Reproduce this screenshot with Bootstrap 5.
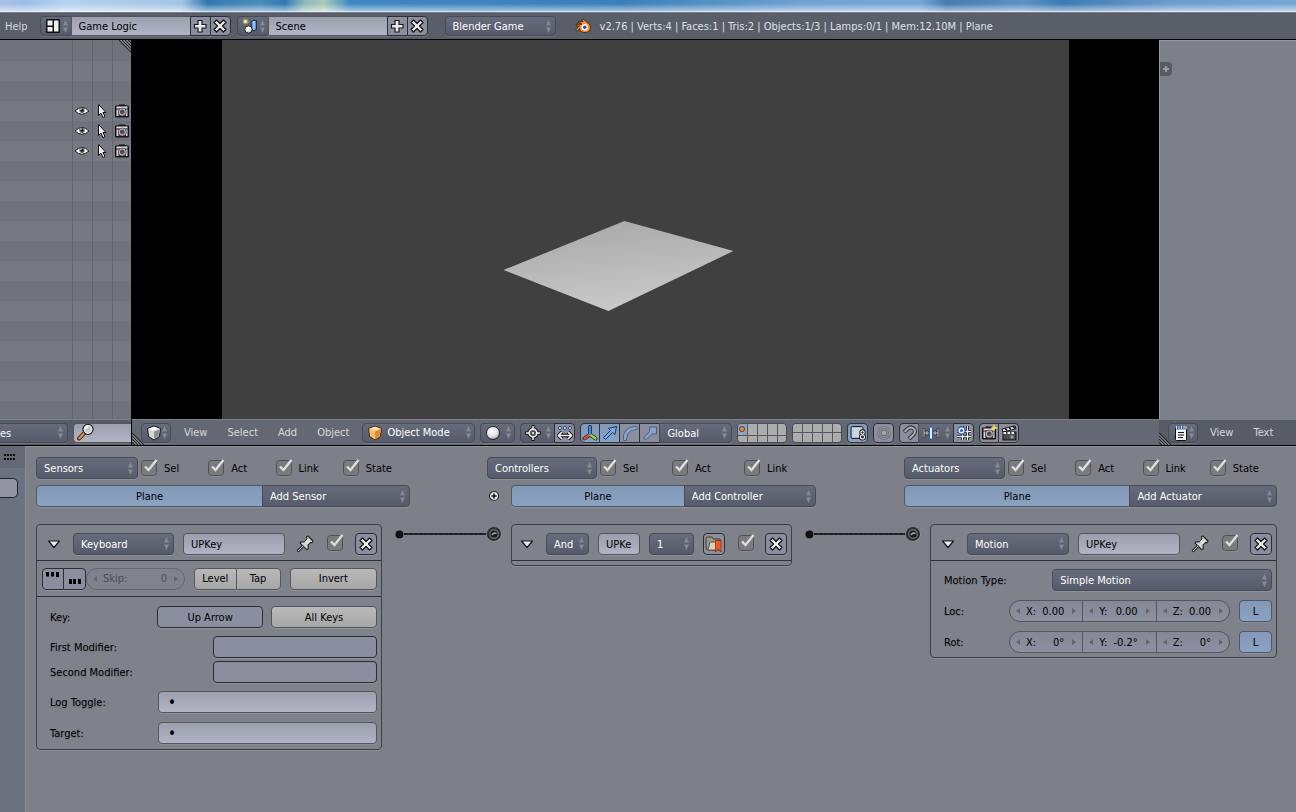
<!DOCTYPE html>
<html lang="en">
<head>
<meta charset="utf-8">
<meta name="viewport" content="width=device-width, initial-scale=1">
<title>Game Logic</title>
<link rel="stylesheet" href="https://cdn.jsdelivr.net/npm/bootstrap@5.3.0/dist/css/bootstrap.min.css">
<style>
:root{--updown:url("data:image/svg+xml,%3Csvg xmlns='http://www.w3.org/2000/svg' width='5' height='13'%3E%3Cpath d='M0 5.5L2.500 0L5 5.5ZM0 7.5H5L2.500 13Z' fill='%23868990'/%3E%3C/svg%3E");}
html{height:100%}
body{min-height:100%;margin:0;background:#7d8088;color:#000;font-family:"DejaVu Sans Condensed","DejaVu Sans",sans-serif;font-size:11px;line-height:14px;overflow-x:hidden}
svg{display:block;flex:none}
.ico{width:16px;height:16px}
/* desktop edge above the window */
.desktop{height:12px;background:linear-gradient(180deg,transparent 30%,rgba(255,255,255,.5) 90%,#fff),linear-gradient(90deg,#a9c0e6 0,#9cbdea 2%,#b5d3f0 5%,#a3c4e6 14%,#3278b0 16%,#4a8cbc 20%,#3179b4 22%,#8fb8bc 23.5%,#a9cbb8 25%,#4088c2 27%,#3b7fba 48%,#6fa3d2 62%,#76a9d8 71%,#457bb0 73%,#5c93c6 79%,#3c79b4 82%,#6a9ccc 90%,#78a8d6 100%)}
.bar-top{height:28px;background:#5a5e69;border-top:1px solid #777b87;border-bottom:1px solid #000;padding-left:5px;color:#dfe0e3}
.bar-top .mnu,.bar-top .stats{line-height:16px;padding-top:2px}
.bar-area{height:27px;border-top:1px solid #7c808b;border-bottom:1px solid #000;background:#646874}
.bar-area .mnu{padding-top:1px}
.bar-dark{background:#585c67}
/* widgets */
.form-select.sel,.btn.w,.form-control.fld{font:inherit;line-height:20px;height:22px;min-width:0;border:1px solid #484b53;border-radius:4px;box-shadow:0 1px 0 rgba(255,255,255,.13);padding:1px 7px 0;white-space:nowrap}
.form-select.sel{color:#fff;background:var(--updown) no-repeat right 4px center,linear-gradient(#666c7c,#555b6a);background-size:5px 13px,auto;overflow:hidden}
.btn.w{display:flex;align-items:center;justify-content:center}
.btn.menu.w{color:#fff;background:var(--updown) no-repeat right 3px center,linear-gradient(#666c7c,#555b6a);padding:0 12px 0 4px;justify-content:flex-start}
.form-control.fld{color:#000;background:linear-gradient(#9c9fae,#b1b4c5);border-color:#55575e}
.btn.tool.w{background:#8b8e9e;border-color:#2c2e33;color:#000;padding:0}
.btn.grey.w{background:linear-gradient(#b9b9b9,#a6a6a6);border-color:#55575b;color:#000;padding:1px 0 0}
.btn.on.w{background:linear-gradient(#8199b7,#8ba3c2);border-color:#4d5868;color:#000;padding:1px 0 0}
.btn.tool.on.w{border-color:#2c3440;padding:0}
.btn.tool.txt{padding:1px 0 0}
.form-control.dot{font-size:15px;padding-left:9px}
.short .form-select.sel,.short .btn.w,.short .form-control.fld{height:20px;line-height:18px}
.joined>*{margin:0}
.joined>*:not(:first-child){border-top-left-radius:0!important;border-bottom-left-radius:0!important;margin-left:-1px}
.joined>*:not(:last-child){border-top-right-radius:0!important;border-bottom-right-radius:0!important}
.grow{flex:1 1 0!important;width:1px}
.sq{width:21px;flex:none}
.sq:first-child{width:20px}
.mnu{color:#d7d8dc;text-decoration:none;padding:0 10px}
.id-icon{width:32px}.id-name{width:120px!important}
.seg5{gap:5px}
/* outliner */
.outliner{width:132px;border-right:1px solid #000}
.rows{position:relative;overflow:hidden;background:linear-gradient(90deg,transparent 72px,#62656d 72px 73px,transparent 73px 92px,#62656d 92px 93px,transparent 93px 112px,#62656d 112px 113px,transparent 113px),repeating-linear-gradient(#70737b 0 20px,#767981 20px 40px);background-position:0 0,0 1px;padding-top:61px}
.rows .line{height:20px;padding-left:74px;gap:4px}
.grip{position:absolute;width:12px;height:12px}
.mid{flex:406 1 0;min-height:200px}
.logic{flex:366 1 0}
.stage{background:#000;padding:0 8.77%}
.stage svg{width:100%;height:100%;background:#404040}
.texted{width:137px}
.textbody{background:#7d8088;border-left:1px solid #9497a0;border-top:1px solid #9497a0;position:relative}
.tab-plus{position:absolute;left:0;top:21px;width:12px;height:14px;background:#595b60;border:0;border-radius:0 4px 4px 0;padding:0}
/* layers */
.layers{display:grid;grid-template-columns:repeat(5,1fr);width:50px;height:20px;gap:1px;background:#55575c;border:1px solid #4a4c51;border-radius:4px;overflow:hidden}
.layers button{border:0;padding:0;background:#adadad}
.layers .cur{background:#8aa4c6}
.layers .cur::after{content:"";display:block;width:4px;height:4px;margin:1px 2px;border-radius:3px;background:#f58a2a;outline:1px solid #6b3a12}
/* logic editor */
.side{width:26px;background:#6c7180;border-right:1px solid #888b96}
.side-head{height:22px;background:#656975}
.side-btn{width:18px;height:20px;background:#9193a1;border:1px solid #25262a;border-left:0;border-radius:0 5px 5px 0;margin-top:10px}
.board{border-top:1px solid #90939b;padding:10px 19px 0 10px}
.heads{display:grid;grid-template-columns:451fr 417fr 373fr}
.chk4{display:grid;grid-template-columns:repeat(4,1fr)}
.chk3{display:grid;grid-template-columns:repeat(3,1fr)}
.chk{display:flex;align-items:center;gap:6px;line-height:20px;padding-top:1px}
.form-check-input.tick{width:17px;height:18px;margin:0 0 1px;border:0;border-radius:0;flex:none;background:url("data:image/svg+xml,%3Csvg xmlns='http://www.w3.org/2000/svg' width='17' height='18'%3E%3Crect x='.5' y='2' width='15' height='15.500' rx='3.500' fill='%2394979f'/%3E%3Crect x='.5' y='1.500' width='15' height='15' rx='3' fill='%237b7b7b' stroke='%23505156'/%3E%3Cpath d='M4 7.500L7.500 11L15.500 1' fill='none' stroke='%23dedede' stroke-width='2.400'/%3E%3C/svg%3E") no-repeat 0 0!important}
.bricks{display:grid;grid-template-columns:346fr 129fr 281fr 138fr 347fr;align-items:start;margin-top:17px}
.brick{border:1px solid #3e4046;border-radius:4px;background:#7f818b;--bs-card-color:#000;color:#000;box-shadow:0 1px 0 rgba(255,255,255,.1)}
.brick .bh{height:36px;border-bottom:1px solid #2e3035;padding:2px 4px 0 9px;gap:9px}
.bh .tri{margin-right:2px}
.bh .pinned{margin:0 4px 0 2px}
.brick .lbl{text-shadow:0 1px 1px rgba(0,0,0,.15);line-height:20px;padding-top:1px}
.kb-opts{height:36px;border-bottom:1px solid #2e3035;padding:0 4px 0 5px}
.skip{position:relative;width:29.6%;height:22px;line-height:20px;border:1px solid #65676f;border-radius:11px;background:#80828c;color:#4b4d54;padding:1px 17px 0 16px}
.levels{width:25.8%;margin:0 9px}
.num{position:relative;height:22px;line-height:20px;border:1px solid #54565d;background:linear-gradient(#858794,#8d90a0);flex:1 1 0;min-width:0;padding:1px 18px 0 16px}
.joined>.num:first-child{border-radius:11px 0 0 11px}
.joined>.num:last-child{border-radius:0 11px 11px 0}
.num input,.skip input{font:inherit;line-height:20px;border:0;background:none;width:1px;flex:1;min-width:0;text-align:right;padding:0;color:inherit;height:20px}
.num::before,.num::after,.skip::before,.skip::after{content:"";position:absolute;top:7px;border:3px solid transparent}
.num::before,.skip::before{left:3px;border-right:4px solid #62656c}
.num::after,.skip::after{right:3px;border-left:4px solid #62656c}
.wirecell{display:flex;align-items:center;padding:0 9px 0 13px;height:20px}
.cord{height:2px;background:repeating-linear-gradient(90deg,#1d1e20 0 4px,#303236 4px 5px);flex:1}
.w101{width:101px!important}.w102{width:102px!important}
.wide-field{width:67%!important}.half-field{width:50.2%}.third-field{width:32.4%}
</style>
</head>
<body class="d-flex flex-column">
<svg width="0" height="0" class="position-absolute" aria-hidden="true">
<defs>
<radialGradient id="gs" cx=".4" cy=".3" r=".8"><stop offset="0" stop-color="#fff"/><stop offset=".6" stop-color="#e2e2e2"/><stop offset="1" stop-color="#777"/></radialGradient>
</defs>
<symbol id="plus" viewBox="0 0 16 16"><path d="M6 2.500h4v4h4v3.500h-4v4H6v-4H2.500V6.500H6z" fill="#e9e9e9" stroke="#1b1b1b" stroke-width="1.200"/></symbol>
<symbol id="cross" viewBox="0 0 16 16"><path d="M4.500 2L8 5.500L11.500 2L14 4.500L10.500 8L14 11.500L11.500 14L8 10.500L4.500 14L2 11.500L5.500 8L2 4.500Z" fill="#eee" stroke="#141414" stroke-width="1.300" stroke-linejoin="round"/></symbol>
<symbol id="layout" viewBox="0 0 16 16"><rect x="1" y="1" width="14" height="14" rx="1" fill="#111"/><path d="M2.500 2.500h5v5h-5zM2.500 9h5v4.500h-5zM9 2.500h4.500v11H9z" fill="#eee"/></symbol>
<symbol id="scene" viewBox="0 0 16 16"><path d="M9 4q3-3 5.500-1.500v9q-3 2.500-5-.5z" fill="#5d91dd" stroke="#1c2c4c"/><path d="M10.500 4.500l1.500-1v8" stroke="#cfe2ff" fill="none"/><circle cx="6.500" cy="11.500" r="3.700" fill="url(#gs)" stroke="#222"/><circle cx="3.500" cy="3.500" r="3" fill="#c9c04c" opacity=".55"/><circle cx="3.500" cy="3.500" r="1.600" fill="#ffffa5"/></symbol>
<symbol id="blender" viewBox="0 0 16 16"><path d="M6.500 1.500l1.500-.5 5 4q2.800 2 2.500 5-.8 4.500-5.500 4.500-4.800 0-5.500-4L2.500 13 .8 11.500 4.500 8H1.500L1 6.300h6L5.700 5H3.500L3.200 3.500h5z" fill="#f79432" stroke="#4b260a" stroke-width=".9"/><circle cx="9.800" cy="9.300" r="3.200" fill="#fff"/><circle cx="9.800" cy="9.300" r="1.800" fill="#24599b"/></symbol>
<symbol id="eye" viewBox="0 0 16 16"><path d="M1 8Q8 1 15 8Q8 14.500 1 8Z" fill="#f4f4f4" stroke="#222" stroke-width="1"/><circle cx="8" cy="7.300" r="2.600" fill="#666"/><circle cx="8" cy="7.300" r="1.400" fill="#111"/><circle cx="7" cy="6.300" r=".7" fill="#fff"/></symbol>
<symbol id="cursor" viewBox="0 0 16 16"><path d="M4.500 1.500v11l2.500-2.300 2 4.300 2-1-2-4h3z" fill="#eee" stroke="#111" stroke-width="1"/></symbol>
<symbol id="camera" viewBox="0 0 16 16"><path d="M1.500 3h3.500v-1h6v1h3.500v11h-13z" fill="#222" stroke="#111"/><path d="M2.500 3.500h11v2h-11z" fill="#ddd"/><path d="M2.500 6.500h2v6.500h-2zM12 6.500h1.500v6.500h-1.500z" fill="#d0d0d0"/><circle cx="8.300" cy="9" r="4" fill="#c4c4c4" stroke="#333" stroke-width=".7"/><circle cx="8.300" cy="9" r="2.400" fill="#3a4c66"/><path d="M8.500 10.200l2 1" stroke="#d0553c" stroke-width="1.500"/><path d="M4 6h1.500" stroke="#e22" stroke-width="1.500"/></symbol>
<symbol id="lens" viewBox="0 0 18 18"><path d="M2 15.500L7.500 10" stroke="#4c2b13" stroke-width="4" stroke-linecap="round"/><path d="M2.300 15.200L7 10.500" stroke="#db935b" stroke-width="2.200" stroke-linecap="round"/><circle cx="11" cy="6.300" r="5" fill="#c6c9cd" stroke="#222" stroke-width="1.300"/><circle cx="11" cy="6.300" r="3.900" fill="none" stroke="#eee"/><path d="M8.500 6q.5-2.500 3-2.500" stroke="#fff" fill="none" stroke-width="1.300"/></symbol>
<symbol id="cube" viewBox="0 0 16 16"><path d="M8 1L14.500 3.500L13.500 11.500L8 15L2.500 11.500L1.500 3.500Z" fill="#d6d6d6" stroke="#151515" stroke-linejoin="round"/><path d="M8 6.500L13.500 4.200L12.700 11L8 14Z" fill="#909090"/><path d="M2.500 3.800L8 1.700L13.500 3.800L8 6Z" fill="#fafafa"/></symbol>
<symbol id="ocube" viewBox="0 0 16 16"><path d="M8 1L14.500 3.500L13.500 11.500L8 15L2.500 11.500L1.500 3.500Z" fill="#f5bd7c" stroke="#4a2a0c" stroke-linejoin="round"/><path d="M8 6.500L13.500 4.200L12.700 11L8 14Z" fill="#e58a2c"/><path d="M2.500 3.800L8 1.700L13.500 3.800L8 6Z" fill="#fbdcb0"/></symbol>
<symbol id="ball" viewBox="0 0 16 16"><circle cx="8" cy="8" r="6.500" fill="url(#gs)" stroke="#222"/></symbol>
<symbol id="pivot" viewBox="0 0 16 16"><path d="M8 0v5M8 11v5M0 8h5M11 8h5" stroke="#111" stroke-width="3"/><circle cx="8" cy="8" r="3.900" fill="none" stroke="#111" stroke-width="3.600"/><path d="M8 1v3M8 12v3M1 8h3M12 8h3" stroke="#eee" stroke-width="1.500"/><circle cx="8" cy="8" r="3.900" fill="#555" stroke="#eee" stroke-width="1.600"/><circle cx="8" cy="8" r="1" fill="#fff"/></symbol>
<symbol id="align" viewBox="0 0 16 16"><path d="M5 7L1.500 10.500L5 14M11 7l3.500 3.500L11 14M2 10.500h12" fill="none" stroke="#111" stroke-width="3.600"/><path d="M5 7L1.500 10.500L5 14M11 7l3.500 3.500L11 14M2 10.500h12" fill="none" stroke="#eee" stroke-width="1.700"/><g fill="#b9d2f5" stroke="#253f74" stroke-width=".9"><circle cx="3" cy="3" r="1.600"/><circle cx="8" cy="3" r="1.600"/><circle cx="13" cy="3" r="1.600"/></g></symbol>
<symbol id="axes" viewBox="0 0 16 16"><g stroke-linecap="round"><path d="M8 9.500L2.500 13.500M8 9.500l5.500 4M8 9V2" stroke="#222" stroke-width="4"/><path d="M8 9.500L2.500 13.500" stroke="#f04a3a" stroke-width="2.400"/><path d="M8 9.500l5.500 4" stroke="#93dc3c" stroke-width="2.400"/><path d="M8 9V2" stroke="#3d88f0" stroke-width="2.400"/></g></symbol>
<symbol id="arrow" viewBox="0 0 16 16"><path d="M14.500 1.500L13 9.500L10.500 7.500L3.500 14.500L1.500 12.500L8.500 5.500L6.500 3.500Z" fill="#78a9ea" stroke="#1c3562" stroke-linejoin="round"/></symbol>
<symbol id="arc" viewBox="0 0 16 16"><path d="M3 14Q3 4 13.500 3" fill="none" stroke="#4a5c82" stroke-width="4.200" stroke-linecap="round"/><path d="M3 14Q3 4 13.500 3" fill="none" stroke="#8aa5cf" stroke-width="2.400" stroke-linecap="round"/></symbol>
<symbol id="scale" viewBox="0 0 16 16"><path d="M7.500 2h7v7h-4l-7 6-2-2 6-6.500z" fill="#84a0cf" stroke="#4a5c82" stroke-linejoin="round"/></symbol>
<symbol id="lock" viewBox="0 0 16 16"><rect x="1" y="1.500" width="12" height="12" rx="1.500" fill="#aebfd3" stroke="#222"/><rect x="2.500" y="3" width="8" height="9" fill="#c9d5e2"/><g fill="none" stroke="#111" stroke-width="3"><circle cx="12.500" cy="7.500" r="1.700"/><circle cx="12.500" cy="12" r="2"/></g><g fill="none" stroke="#eee" stroke-width="1.200"><circle cx="12.500" cy="7.500" r="1.700"/><circle cx="12.500" cy="12" r="2"/></g></symbol>
<symbol id="prop" viewBox="0 0 16 16"><circle cx="8" cy="8" r="5.500" fill="none" stroke="#686a72" stroke-width="2.400"/><circle cx="8" cy="8" r="5.500" fill="none" stroke="#a0a2aa" stroke-width="1"/><circle cx="8" cy="8" r="2.800" fill="#a3a5a9" stroke="#6c6e76"/></symbol>
<symbol id="magnet" viewBox="0 0 16 16"><path d="M3 7L7 3.500Q11 1 13.500 4.500Q15 8 11.500 10.500L8 14" fill="none" stroke="#33353b" stroke-width="4"/><path d="M3.500 6.700L7 3.500Q11 1 13.500 4.500Q15 8 11.500 10.500L8.500 13.500" fill="none" stroke="#abadb2" stroke-width="2"/></symbol>
<symbol id="incr" viewBox="0 0 16 16"><path d="M1 3v10M4 5v6M1 8h14M12 5v6M15 3v10" stroke="#222" stroke-width="2.400"/><path d="M1 3.500v9M4 5.500v5M1 8h14M12 5.500v5M15 3.500v9" stroke="#ccc" stroke-width="1"/><rect x="6.500" y="2" width="3" height="12" rx="1" fill="#dceafe" stroke="#2861bf"/></symbol>
<symbol id="grid" viewBox="0 0 16 16"><path d="M6.500 1v14M11.500 1v14M1 6.500h14M1 11.500h14" stroke="#111" stroke-width="3"/><path d="M6.500 1v14M11.500 1v14M1 6.500h14M1 11.500h14" stroke="#eee" stroke-width="1.300"/><circle cx="5.500" cy="5.500" r="3.600" fill="#eaf2ff" stroke="#2b5bb5" stroke-width="1.300"/><circle cx="5.500" cy="5.500" r="1.500" fill="#2b5bb5"/></symbol>
<symbol id="spark" viewBox="0 0 8 8"><path d="M4 0l1 3 3 1-3 1-1 3-1-3-3-1 3-1z" fill="#ffdd55"/></symbol>
<symbol id="clap" viewBox="0 0 16 16"><path d="M1 4L14 .8l.8 3L2 7z" fill="#eee" stroke="#111"/><path d="M4 3.500l2 2M8 2.500l2 2M12 1.500l2 2" stroke="#111" stroke-width="1.600"/><rect x="2" y="7" width="13" height="8" fill="#4b4d52" stroke="#111"/><path d="M2.500 8h12" stroke="#eee" stroke-dasharray="2.500 1.500" stroke-width="2"/><path d="M11 10v4M9 12h4" stroke="#aaa"/></symbol>
<symbol id="note" viewBox="0 0 16 16"><rect x="2.500" y="2.500" width="11" height="13" rx="1" fill="#f1f1f1" stroke="#111"/><path d="M3 3h10" stroke="#2b4f86" stroke-width="3"/><path d="M3.500 1v3.500M6 1v3.500M8.500 1v3.500M11 1v3.500M13 1v3.500" stroke="#dce8fa" stroke-width="1"/><path d="M5 7.500h6M5 10h6M5 12.500h5" stroke="#111" stroke-width="1.200"/></symbol>
<symbol id="tri" viewBox="0 0 16 16"><path d="M2.500 5h11L8 11.500z" fill="#eee" stroke="#151515" stroke-width="1.200" stroke-linejoin="round"/></symbol>
<symbol id="pin" viewBox="0 0 18 18"><path d="M1.500 16.500L7 11" stroke="#222" stroke-width="2.600"/><path d="M10.500 1.500L12 1l5 5-.8 1.600-1.700-.1-2.500 2.700.3 3.300-1.500 1.200L4 8.200l1.200-1.500 3.300.3L11 4.200z" fill="#d2d2ce" stroke="#222" stroke-width="1.100" stroke-linejoin="round"/><path d="M2 16L7 11" stroke="#ddd" stroke-width="1"/><path d="M9 7.500l3-3.500M10.500 9l3-3" stroke="#fff"/></symbol>
<symbol id="pulse-hi" viewBox="0 0 16 16"><path d="M2.500 1v4.500M7.500 1v4.500M12.500 1v5" stroke="#000" stroke-width="3"/></symbol>
<symbol id="pulse-lo" viewBox="0 0 16 16"><path d="M3.500 8v5M7.500 8v5M12.500 8v5" stroke="#000" stroke-width="3"/></symbol>
<symbol id="folder" viewBox="0 0 18 18"><path d="M1 3.500q0-1.500 1.500-1.500H7l1.500 2H14q1.500 0 1.500 1.500V15H2.500L1 13z" fill="#9b9785" stroke="#3a382f"/><path d="M5 7h10.500V15H3z" fill="#d7d2bd" stroke="#5a574b"/><path d="M10.500 5.500h5.500V17l-2.500-3-3 3z" fill="#ee5a22" stroke="#8d2d0b" stroke-width=".8"/></symbol>
<symbol id="addc" viewBox="0 0 12 12"><circle cx="6" cy="6" r="4.500" fill="#e6e6e6" stroke="#2c2c2c" stroke-width="1.200"/><path d="M6 3.500v5M3.500 6h5" stroke="#111" stroke-width="1.600"/></symbol>
<symbol id="socket" viewBox="0 0 16 16"><circle cx="8.800" cy="8.800" r="6.800" fill="#a2a4aa"/><circle cx="8" cy="8" r="5.600" fill="#17181a" stroke="#2b2c2f" stroke-width="3"/><circle cx="8" cy="8" r="4.300" fill="none" stroke="#686a6e" stroke-width="1.400"/><path d="M6 9q2-3 4.500-1.500" stroke="#aaa" fill="none" stroke-width="1.600"/></symbol>
<symbol id="plug" viewBox="0 0 9 9"><circle cx="5" cy="5" r="4" fill="#96989f"/><circle cx="4.500" cy="4.500" r="4" fill="#111"/></symbol>
<symbol id="gripr" viewBox="0 0 12 12"><path d="M0 0L12 12M3 0l9 9M6 0l6 6M9 0l3 3" stroke="#222" stroke-width="1.200"/><path d="M1.500 0L12 10.500M4.500 0L12 7.500M7.500 0L12 4.500" stroke="#b4b5ba" stroke-width=".8"/></symbol>
<symbol id="gripl" viewBox="0 0 12 12"><path d="M0 0L12 12M0 3l9 9M0 6l6 6M0 9l3 3" stroke="#222" stroke-width="1.200"/><path d="M0 1.500L10.500 12M0 4.500L7.500 12M0 7.500L4.500 12" stroke="#b4b5ba" stroke-width=".8"/></symbol>
</svg>

<div class="desktop"></div>

<header class="bar-top short d-flex align-items-center">
  <a href="#" class="mnu px-0 me-2">Help</a>
  <div class="d-flex joined ms-1">
    <button class="btn w menu id-icon" aria-label="Screen layouts"><svg class="ico"><use href="#layout"/></svg></button>
    <input class="form-control fld id-name" value="Game Logic" aria-label="Screen layout">
    <button class="btn w tool sq" aria-label="Add layout"><svg class="ico"><use href="#plus"/></svg></button>
    <button class="btn w tool sq" aria-label="Delete layout"><svg class="ico"><use href="#cross"/></svg></button>
  </div>
  <div class="d-flex joined" style="margin-left:6px">
    <button class="btn w menu id-icon" aria-label="Scenes"><svg class="ico"><use href="#scene"/></svg></button>
    <input class="form-control fld id-name" value="Scene" aria-label="Scene name">
    <button class="btn w tool sq" aria-label="Add scene"><svg class="ico"><use href="#plus"/></svg></button>
    <button class="btn w tool sq" aria-label="Delete scene"><svg class="ico"><use href="#cross"/></svg></button>
  </div>
  <select class="form-select sel" style="width:111px;margin-left:17px" aria-label="Render engine"><option>Blender Game</option></select>
  <svg class="ico" style="margin:0 9px 0 19px"><use href="#blender"/></svg>
  <span class="stats text-nowrap">v2.76 | Verts:4 | Faces:1 | Tris:2 | Objects:1/3 | Lamps:0/1 | Mem:12.10M | Plane</span>
</header>

<div class="mid d-flex">
  <section class="outliner d-flex flex-column flex-shrink-0">
    <div class="rows flex-fill">
      <div class="line d-flex align-items-center"><svg class="ico"><use href="#eye"/></svg><svg class="ico"><use href="#cursor"/></svg><svg class="ico"><use href="#camera"/></svg></div>
      <div class="line d-flex align-items-center"><svg class="ico"><use href="#eye"/></svg><svg class="ico"><use href="#cursor"/></svg><svg class="ico"><use href="#camera"/></svg></div>
      <div class="line d-flex align-items-center"><svg class="ico"><use href="#eye"/></svg><svg class="ico"><use href="#cursor"/></svg><svg class="ico"><use href="#camera"/></svg></div>
      <svg class="grip top-0 end-0"><use href="#gripr"/></svg>
    </div>
    <div class="bar-area bar-dark short d-flex align-items-center seg5 overflow-hidden">
      <select class="form-select sel flex-shrink-0 ps-0 rounded-start-0 border-start-0" style="width:68px" aria-label="Display mode"><option>es</option></select>
      <div class="position-relative grow">
        <input class="form-control fld rounded-end-0 border-end-0" aria-label="Search">
        <svg class="position-absolute top-0 start-0 ms-1" width="18" height="18"><use href="#lens"/></svg>
      </div>
    </div>
  </section>

  <section class="flex-fill d-flex flex-column" style="min-width:0">
    <div class="stage flex-fill" style="min-height:0">
      <svg viewBox="0 0 846 379" preserveAspectRatio="xMidYMid meet">
        <defs><linearGradient id="pl" x1=".35" y1="0" x2=".65" y2="1"><stop offset="0" stop-color="#a9a9a9"/><stop offset="1" stop-color="#cbcbcb"/></linearGradient></defs>
        <path d="M281 230L402 181L511 211L386 271Z" fill="url(#pl)"/>
      </svg>
    </div>
    <div class="bar-area short d-flex align-items-center seg5 position-relative overflow-hidden">
      <svg class="grip bottom-0 start-0"><use href="#gripl"/></svg>
      <button class="btn w menu" style="width:30px;margin-left:9px" aria-label="Editor type"><svg class="ico"><use href="#cube"/></svg></button>
      <nav class="d-flex"><a class="mnu ps-2" href="#">View</a><a class="mnu" href="#">Select</a><a class="mnu" href="#">Add</a><a class="mnu pe-2" href="#">Object</a></nav>
      <button class="btn w menu" style="width:113px"><svg class="ico me-1"><use href="#ocube"/></svg>Object Mode</button>
      <button class="btn w menu" style="width:35px" aria-label="Shading"><svg class="ico"><use href="#ball"/></svg></button>
      <div class="d-flex joined">
        <button class="btn w menu" style="width:35px" aria-label="Pivot"><svg class="ico"><use href="#pivot"/></svg></button>
        <button class="btn w tool sq" aria-label="Centre points"><svg class="ico"><use href="#align"/></svg></button>
      </div>
      <div class="d-flex joined">
        <button class="btn w tool on sq" aria-label="Manipulator"><svg class="ico"><use href="#axes"/></svg></button>
        <button class="btn w tool on sq" aria-label="Translate"><svg class="ico"><use href="#arrow"/></svg></button>
        <button class="btn w tool sq" aria-label="Rotate"><svg class="ico"><use href="#arc"/></svg></button>
        <button class="btn w tool sq" aria-label="Scale"><svg class="ico"><use href="#scale"/></svg></button>
        <select class="form-select sel" style="width:73px" aria-label="Orientation"><option>Global</option></select>
      </div>
      <div class="layers"><button class="cur" aria-label="Layer 1"></button><button></button><button></button><button></button><button></button><button></button><button></button><button></button><button></button><button></button></div>
      <div class="layers"><button></button><button></button><button></button><button></button><button></button><button></button><button></button><button></button><button></button><button></button></div>
      <button class="btn w tool on sq" aria-label="Lock to scene"><svg class="ico"><use href="#lock"/></svg></button>
      <button class="btn w tool sq" aria-label="Proportional"><svg class="ico"><use href="#prop"/></svg></button>
      <div class="d-flex joined">
        <button class="btn w tool sq" aria-label="Snap"><svg class="ico"><use href="#magnet"/></svg></button>
        <button class="btn w menu" style="width:36px" aria-label="Snap element"><svg class="ico"><use href="#incr"/></svg></button>
        <button class="btn w tool sq" aria-label="Grid snap"><svg class="ico"><use href="#grid"/></svg></button>
      </div>
      <div class="d-flex joined">
        <button class="btn w tool sq position-relative" aria-label="Render"><svg class="ico"><use href="#camera"/></svg><svg class="position-absolute top-0 end-0" width="8" height="8"><use href="#spark"/></svg></button>
        <button class="btn w tool sq" aria-label="Render animation"><svg class="ico"><use href="#clap"/></svg></button>
      </div>
    </div>
  </section>

  <section class="texted d-flex flex-column flex-shrink-0">
    <div class="textbody flex-fill"><button class="tab-plus" aria-label="Show panel"><svg width="12" height="14"><path d="M6 4v6M3 7h6" stroke="#9a9ca1" stroke-width="2"/></svg></button></div>
    <div class="bar-area bar-dark short d-flex align-items-center position-relative">
      <svg class="grip bottom-0 start-0"><use href="#gripl"/></svg>
      <button class="btn w menu" style="width:30px;margin-left:9px" aria-label="Editor type"><svg class="ico"><use href="#note"/></svg></button>
      <nav class="d-flex"><a class="mnu ps-2 ms-1" href="#">View</a><a class="mnu" href="#">Text</a></nav>
    </div>
  </section>
</div>

<main class="logic d-flex">
  <aside class="side flex-shrink-0">
    <div class="side-head d-flex align-items-center"><svg class="ms-1" width="12" height="6" shape-rendering="crispEdges"><path d="M0 1h12M0 5h12" stroke="#111" stroke-width="2" stroke-dasharray="2 1"/></svg></div>
    <button class="side-btn d-block p-0" aria-label="Add property"></button>
  </aside>
  <div class="board flex-fill">
    <div class="heads">
      <div style="padding-right:77px">
        <div class="d-flex">
          <select class="form-select sel" style="width:102px;margin-right:3px" aria-label="Sensors"><option>Sensors</option></select>
          <div class="chk4 flex-fill">
            <label class="chk"><input type="checkbox" class="form-check-input tick" checked>Sel</label>
            <label class="chk"><input type="checkbox" class="form-check-input tick" checked>Act</label>
            <label class="chk"><input type="checkbox" class="form-check-input tick" checked>Link</label>
            <label class="chk"><input type="checkbox" class="form-check-input tick" checked>State</label>
          </div>
        </div>
        <div class="d-flex joined" style="margin-top:6px">
          <button class="btn w on" style="width:60.7%">Plane</button>
          <select class="form-select sel grow" aria-label="Add Sensor"><option>Add Sensor</option></select>
        </div>
      </div>
      <div style="padding-right:88px">
        <div class="d-flex">
          <select class="form-select sel" style="width:110px;margin-right:3px" aria-label="Controllers"><option>Controllers</option></select>
          <div class="chk3 flex-fill">
            <label class="chk"><input type="checkbox" class="form-check-input tick" checked>Sel</label>
            <label class="chk"><input type="checkbox" class="form-check-input tick" checked>Act</label>
            <label class="chk"><input type="checkbox" class="form-check-input tick" checked>Link</label>
          </div>
        </div>
        <div class="d-flex align-items-center" style="margin-top:6px">
          <button class="btn p-0 border-0" style="margin:0 11px 0 1px" aria-label="Show states"><svg width="12" height="12"><use href="#addc"/></svg></button>
          <div class="d-flex joined flex-fill">
            <button class="btn w on" style="width:57%">Plane</button>
            <select class="form-select sel grow" aria-label="Add Controller"><option>Add Controller</option></select>
          </div>
        </div>
      </div>
      <div>
        <div class="d-flex">
          <select class="form-select sel" style="width:101px;margin-right:3px" aria-label="Actuators"><option>Actuators</option></select>
          <div class="chk4 flex-fill">
            <label class="chk"><input type="checkbox" class="form-check-input tick" checked>Sel</label>
            <label class="chk"><input type="checkbox" class="form-check-input tick" checked>Act</label>
            <label class="chk"><input type="checkbox" class="form-check-input tick" checked>Link</label>
            <label class="chk"><input type="checkbox" class="form-check-input tick" checked>State</label>
          </div>
        </div>
        <div class="d-flex joined" style="margin-top:6px">
          <button class="btn w on" style="width:60.7%">Plane</button>
          <select class="form-select sel grow" aria-label="Add Actuator"><option>Add Actuator</option></select>
        </div>
      </div>
    </div>

    <div class="bricks">
      <div class="card brick">
        <div class="bh d-flex align-items-center">
          <svg class="ico tri"><use href="#tri"/></svg>
          <select class="form-select sel w101" aria-label="Sensor type"><option>Keyboard</option></select>
          <input class="form-control fld w102" value="UPKey" aria-label="Sensor name">
          <svg class="pinned" width="18" height="18"><use href="#pin"/></svg>
          <input type="checkbox" class="form-check-input tick" checked aria-label="Active">
          <button class="btn w tool ms-auto" style="width:22px" aria-label="Remove"><svg class="ico"><use href="#cross"/></svg></button>
        </div>
        <div class="kb-opts d-flex align-items-center">
          <div class="d-flex joined">
            <button class="btn w tool" style="width:22px" aria-label="Pulse true level"><svg class="ico"><use href="#pulse-hi"/></svg></button>
            <button class="btn w tool" style="width:23px" aria-label="Pulse false level"><svg class="ico"><use href="#pulse-lo"/></svg></button>
          </div>
          <label class="skip d-flex align-items-center">Skip:<input value="0"></label>
          <div class="d-flex joined levels">
            <button class="btn w grey" style="width:49%">Level</button><button class="btn w grey grow">Tap</button>
          </div>
          <button class="btn w grey grow">Invert</button>
        </div>
        <div style="padding:9px 4px 5px 13px">
          <div class="d-flex align-items-center" style="gap:8px"><span class="lbl grow">Key:</span><button class="btn w tool txt third-field">Up Arrow</button><button class="btn w grey third-field">All Keys</button></div>
          <div class="d-flex align-items-center" style="margin-top:8px"><label class="lbl grow" for="m1">First Modifier:</label><button id="m1" class="btn w tool half-field"></button></div>
          <div class="d-flex align-items-center" style="margin-top:3px"><label class="lbl grow" for="m2">Second Modifier:</label><button id="m2" class="btn w tool half-field"></button></div>
          <div class="d-flex align-items-center" style="margin-top:8px"><label class="lbl grow" for="lt">Log Toggle:</label><input id="lt" class="form-control fld dot wide-field" value="•"></div>
          <div class="d-flex align-items-center" style="margin-top:9px"><label class="lbl grow" for="tg">Target:</label><input id="tg" class="form-control fld dot wide-field" value="•"></div>
        </div>
      </div>

      <div class="wirecell"><svg width="9" height="9"><use href="#plug"/></svg><span class="cord"></span><svg class="ico"><use href="#socket"/></svg></div>

      <div class="card brick">
        <div class="bh d-flex align-items-center" style="padding-left:7px">
          <svg class="ico tri"><use href="#tri"/></svg>
          <select class="form-select sel" style="width:43px" aria-label="Controller type"><option>And</option></select>
          <input class="form-control fld" value="UPKe" style="width:42px" aria-label="Controller name">
          <select class="form-select sel" style="width:45px" aria-label="State"><option>1</option></select>
          <button class="btn w tool me-1" style="width:22px" aria-label="Priority"><svg width="18" height="18"><use href="#folder"/></svg></button>
          <input type="checkbox" class="form-check-input tick" checked aria-label="Active">
          <button class="btn w tool ms-auto" style="width:22px" aria-label="Remove"><svg class="ico"><use href="#cross"/></svg></button>
        </div>
        <div style="height:4px"></div>
      </div>

      <div class="wirecell"><svg width="9" height="9"><use href="#plug"/></svg><span class="cord"></span><svg class="ico"><use href="#socket"/></svg></div>

      <div class="card brick">
        <div class="bh d-flex align-items-center">
          <svg class="ico tri"><use href="#tri"/></svg>
          <select class="form-select sel w102" aria-label="Actuator type"><option>Motion</option></select>
          <input class="form-control fld w102" value="UPKey" aria-label="Actuator name">
          <svg class="pinned" width="18" height="18"><use href="#pin"/></svg>
          <input type="checkbox" class="form-check-input tick" checked aria-label="Active">
          <button class="btn w tool ms-auto" style="width:22px" aria-label="Remove"><svg class="ico"><use href="#cross"/></svg></button>
        </div>
        <div style="padding:8px 4px 4px 13px">
          <div class="d-flex align-items-center"><label class="lbl grow" for="mt">Motion Type:</label><select id="mt" class="form-select sel wide-field"><option>Simple Motion</option></select></div>
          <div class="d-flex align-items-center" style="margin-top:9px"><span class="lbl" style="flex:65 1 0">Loc:</span>
            <div class="d-flex joined" style="flex:221 1 0"><label class="num d-flex align-items-center">X:<input value="0.00"></label><label class="num d-flex align-items-center">Y:<input value="0.00"></label><label class="num d-flex align-items-center">Z:<input value="0.00"></label></div>
            <button class="btn w on" style="width:33px;margin-left:9px">L</button></div>
          <div class="d-flex align-items-center" style="margin-top:9px"><span class="lbl" style="flex:65 1 0">Rot:</span>
            <div class="d-flex joined" style="flex:221 1 0"><label class="num d-flex align-items-center">X:<input value="0°"></label><label class="num d-flex align-items-center">Y:<input value="-0.2°"></label><label class="num d-flex align-items-center">Z:<input value="0°"></label></div>
            <button class="btn w on" style="width:33px;margin-left:9px">L</button></div>
        </div>
      </div>
    </div>
  </div>
</main>
<script src="https://cdn.jsdelivr.net/npm/bootstrap@5.3.0/dist/js/bootstrap.bundle.min.js"></script>
</body>
</html>
